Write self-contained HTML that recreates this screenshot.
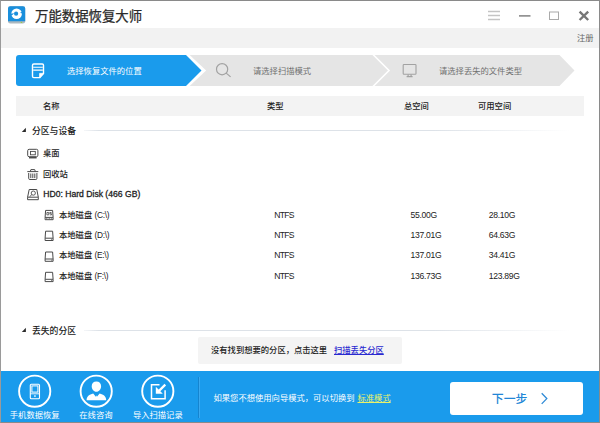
<!DOCTYPE html>
<html lang="zh-CN">
<head>
<meta charset="utf-8">
<title>万能数据恢复大师</title>
<style>
*{margin:0;padding:0;box-sizing:border-box}
html,body{width:600px;height:423px;overflow:hidden;background:#fff}
body{position:relative;font-family:"Liberation Sans","Noto Sans CJK SC",sans-serif;color:#222;font-size:8.3px;font-weight:500}
.abs{position:absolute}
.t{position:absolute;white-space:nowrap;line-height:12px;height:12px}
#frame{position:absolute;left:0;top:0;width:600px;height:423px;border:1px solid #8a8a8a;border-left-color:#9a9a9a;z-index:50;pointer-events:none}
#title{left:35px;top:7.500px;font-size:13.4px;line-height:18px;height:18px;color:#2a2a2a;font-weight:400;-webkit-text-stroke:0.250px #2a2a2a}
#strip{left:1px;top:28px;width:598px;height:20px;background:#f2f2f2}
#hdr{left:16px;top:96px;width:568px;height:20px;background:#f3f3f3}
.row{font-size:8.3px;color:#222}
.num{font-size:8.600px;color:#222;letter-spacing:-0.320px}
.ntfs{font-size:8.600px;letter-spacing:-0.720px}
.lat{font-size:8.400px;letter-spacing:-0.300px}
.sec{font-size:8.800px;color:#222;font-weight:500}
.line{position:absolute;height:1px;background:linear-gradient(to right,rgba(221,226,232,0.300) 0%,#dde2e8 3%,#dde2e8 72%,rgba(221,226,232,0) 100%)}
#msg{left:198px;top:336.500px;width:204px;height:27px;background:#f4f4f4;border-radius:2px}
#bar{left:1px;top:371px;width:598px;height:51px;background:#1a9bec}
.lbl{color:#fff;font-size:8.3px;font-weight:400}
#btn{left:450px;top:382px;width:133px;height:33px;background:#fff;border-radius:3px}
a{color:#2a2ad0;text-decoration:underline}
</style>
</head>
<body>
<div id="strip" class="abs"></div>
<div id="title" class="t">万能数据恢复大师</div>

<!-- app icon -->
<svg class="abs" style="left:7px;top:5px" width="20" height="20" viewBox="0 0 20 20">
  <rect x="1" y="1.300" width="17.200" height="17.300" rx="2.300" fill="#aeb9c0"/>
  <path d="M3.300 1.300h12.600a2.300 2.300 0 0 1 2.300 2.300v12.700h-17.200v-12.700a2.300 2.300 0 0 1 2.300-2.300z" fill="#1a8fdc"/>
  <circle cx="9.600" cy="8.800" r="5.300" fill="#fff"/>
  <circle cx="9.100" cy="8.700" r="2.100" fill="#1a8fdc"/>
  <path d="M7.400 8.300L3.200 8.700L4.300 10.800z" fill="#1a8fdc"/>
  <path d="M15.800 6.500L13 7.800L15.800 8.800z" fill="#1a8fdc"/>
  <rect x="13.700" y="16.900" width="1.500" height="1" fill="#9acb3c"/>
</svg>

<!-- window controls -->
<svg class="abs" style="left:480px;top:5px" width="115" height="20" viewBox="0 0 115 20">
  <g stroke="#c4c4c4" stroke-width="1.500">
    <line x1="8" y1="6.5" x2="20" y2="6.5"/><line x1="8" y1="10.5" x2="20" y2="10.5"/><line x1="8" y1="14.5" x2="20" y2="14.5"/>
  </g>
  <line x1="39" y1="10.9" x2="50.5" y2="10.9" stroke="#7a7a7a" stroke-width="1.4"/>
  <rect x="69.5" y="7" width="9" height="7.5" fill="none" stroke="#aaa" stroke-width="1"/>
  <path d="M99.6 6.6l8.6 8.4M108.2 6.6l-8.6 8.4" stroke="#777" stroke-width="2.400" fill="none"/>
</svg>
<div class="t" style="left:577px;top:32px;font-size:8.3px;color:#666;font-weight:400">注册</div>

<!-- steps -->
<svg class="abs" style="left:0;top:50px" width="600" height="42" viewBox="0 0 600 42">
  <path d="M188 5H559.5L574.5 20.5L559.5 36H188z" fill="#e5e5e5"/>
  <path d="M185 4L202.5 20.5L185 37" fill="none" stroke="#fff" stroke-width="5"/>
  <path d="M19 5H186L201.5 20.5L186 36H19a3 3 0 0 1-3-3V8a3 3 0 0 1 3-3z" fill="#1a9bec"/>
  <path d="M373 4.5L389 20.5L373 36.500" fill="none" stroke="#fff" stroke-width="1.6"/>
  <!-- doc icon -->
  <g fill="none" stroke="#fff" stroke-width="1.400" stroke-linejoin="round">
    <path d="M33.800 14h8.400a1.300 1.300 0 0 1 1.300 1.300v8.300l-3.600 4h-6.100a1.300 1.300 0 0 1-1.300-1.300v-11a1.300 1.300 0 0 1 1.300-1.300z"/>
    <path d="M43.400 23.400h-3.800v4.200z" fill="#fff" stroke-width="0.800"/>
    <path d="M33.200 17.300h9.600M33.200 20.100h9.600" stroke-width="1.100"/>
  </g>
  <!-- search icon -->
  <g fill="none" stroke="#a2a2a2" stroke-width="1.200">
    <circle cx="222.100" cy="19.200" r="5.600"/>
    <path d="M226.200 23.100l4.400 3.800"/>
  </g>
  <!-- monitor icon -->
  <g fill="none" stroke="#a2a2a2" stroke-width="1.100">
    <rect x="403.200" y="14.500" width="12.800" height="9.800" rx="0.800"/>
    <path d="M408.400 24.500l-0.600 2h3.600l-0.600-2M406.600 26.600h6"/>
  </g>
</svg>
<div class="t" style="left:67px;top:65px;font-size:8.3px;color:#fff;font-weight:400">选择恢复文件的位置</div>
<div class="t" style="left:253px;top:65px;font-size:8.3px;color:#707070;font-weight:400">请选择扫描模式</div>
<div class="t" style="left:439px;top:65px;font-size:8.3px;color:#707070;font-weight:400">请选择丢失的文件类型</div>

<!-- table header -->
<div id="hdr" class="abs"></div>
<div class="t row" style="left:43px;top:100px">名称</div>
<div class="t row" style="left:267px;top:100px">类型</div>
<div class="t row" style="left:404px;top:100px">总空间</div>
<div class="t row" style="left:478px;top:100px">可用空间</div>

<!-- section 1 -->
<svg class="abs" style="left:21px;top:127px" width="6" height="6" viewBox="0 0 6 6"><path d="M4.900 0.800V4.900H0.800z" fill="#2a2a2a"/></svg>
<div class="t sec" style="left:32px;top:125px">分区与设备</div>
<div class="line" style="left:84px;top:130px;width:486px"></div>

<!-- icons of tree -->
<svg class="abs" style="left:24px;top:145px" width="34" height="140" viewBox="0 0 34 140" fill="none" stroke="#4a4a4a" stroke-width="1">
  <!-- desktop -->
  <rect x="3.700" y="4.300" width="10.200" height="7.400" rx="1.400"/>
  <rect x="6.500" y="6.400" width="4.800" height="3.400" stroke-width="0.900"/>
  <path d="M5 12.700h7.600" stroke-width="1.500"/>
  <!-- recycle -->
  <path d="M3.300 26.600h11M6.300 26.400l0.600-1.800h3.800l0.600 1.800"/>
  <path d="M4.700 28v5.400a1.100 1.100 0 0 0 1.100 1.100h6a1.100 1.100 0 0 0 1.100-1.100v-5.400M6.800 28.500v4.600M8.800 28.500v4.600M10.800 28.500v4.600"/>
  <!-- hdd -->
  <path d="M5.200 44.500H12.800L14.300 52.200V54.700H3.600V52.200z"/>
  <path d="M3.600 52.200H14.300"/>
  <circle cx="9.300" cy="48.100" r="2.100" stroke-width="0.900"/>
  <path d="M7.800 49.700L5.600 51.700" stroke-width="0.900"/>
  <!-- drives -->
  <path d="M21.6 65.4H28.6L29.1 72.4V74.7H21.1V72.4z"/><path d="M21.1 72.4H29.1"/><path d="M22.9 67.5h1.800v2.400h-1.800zM27.5 67.5h-1.700v1.200h1.700v1.200h-1.700" stroke-width="0.800"/><path d="M22.2 73.6h4.500" stroke-width="0.800" stroke-dasharray="0.800 0.600"/><path d="M27.3 73.6h0.900" stroke-width="0.900"/>
  <path d="M21.6 86.2H28.6L29.1 93.2V95.5H21.1V93.2z"/><path d="M21.1 93.2H29.1"/><path d="M27.3 94.4h0.900" stroke-width="0.900"/>
  <path d="M21.6 107.0H28.6L29.1 114.0V116.3H21.1V114.0z"/><path d="M21.1 114.0H29.1"/><path d="M27.3 115.2h0.900" stroke-width="0.900"/>
  <path d="M21.6 127.3H28.6L29.1 134.3V136.6H21.1V134.3z"/><path d="M21.1 134.3H29.1"/><path d="M27.3 135.5h0.900" stroke-width="0.900"/>
</svg>

<div class="t row" style="left:43px;top:147px">桌面</div>
<div class="t row" style="left:43px;top:167.500px">回收站</div>
<div class="t row" style="left:43.300px;top:188.300px;font-size:8.600px;-webkit-text-stroke:0.300px #222">HD0: Hard Disk (466 GB)</div>
<div class="t row" style="left:59px;top:208.800px">本地磁盘 <span class="lat">(C:\)</span></div>
<div class="t row" style="left:59px;top:229.100px">本地磁盘 <span class="lat">(D:\)</span></div>
<div class="t row" style="left:59px;top:249.400px">本地磁盘 <span class="lat">(E:\)</span></div>
<div class="t row" style="left:59px;top:269.700px">本地磁盘 <span class="lat">(F:\)</span></div>

<div class="t num ntfs" style="left:274.300px;top:208.800px">NTFS</div>
<div class="t num ntfs" style="left:274.300px;top:229.100px">NTFS</div>
<div class="t num ntfs" style="left:274.300px;top:249.400px">NTFS</div>
<div class="t num ntfs" style="left:274.300px;top:269.700px">NTFS</div>

<div class="t num" style="left:410.600px;top:208.800px">55.00G</div>
<div class="t num" style="left:410.600px;top:229.100px">137.01G</div>
<div class="t num" style="left:410.600px;top:249.400px">137.01G</div>
<div class="t num" style="left:410.600px;top:269.700px">136.73G</div>

<div class="t num" style="left:488.800px;top:208.800px">28.10G</div>
<div class="t num" style="left:488.800px;top:229.100px">64.63G</div>
<div class="t num" style="left:488.800px;top:249.400px">34.41G</div>
<div class="t num" style="left:488.800px;top:269.700px">123.89G</div>

<!-- section 2 -->
<svg class="abs" style="left:21px;top:327px" width="6" height="6" viewBox="0 0 6 6"><path d="M4.900 0.800V4.900H0.800z" fill="#2a2a2a"/></svg>
<div class="t sec" style="left:32px;top:325px">丢失的分区</div>
<div class="line" style="left:84px;top:330px;width:486px"></div>

<div id="msg" class="abs"></div>
<div class="t row" style="left:211px;top:344.400px">没有找到想要的分区，点击这里</div>
<div class="t row" style="left:334px;top:344.400px"><a>扫描丢失分区</a></div>

<!-- bottom bar -->
<div id="bar" class="abs"></div>
<svg class="abs" style="left:0;top:371px" width="210" height="52" viewBox="0 0 210 52" fill="none" stroke="#fff">
  <g stroke-width="1.900">
    <circle cx="34.700" cy="20.200" r="15.600"/>
    <circle cx="96.200" cy="20.200" r="15.600"/>
    <circle cx="157.800" cy="20.200" r="15.600"/>
  </g>
  <!-- phone -->
  <rect x="30.300" y="13.300" width="9.200" height="14.400" rx="1" stroke-width="1.100"/>
  <rect x="31.900" y="14.900" width="6" height="6.200" stroke-width="1"/>
  <path d="M30.300 22.800h9.200" stroke-width="0.900"/>
  <rect x="34.200" y="24.300" width="1.500" height="1.500" fill="#fff" stroke="none"/>
  <!-- person -->
  <path d="M96.400 10.400c2.900 0 4.700 2 4.700 4.800 0 2.900-2 5.500-4.700 5.500s-4.700-2.600-4.700-5.500c0-2.800 1.800-4.800 4.700-4.800z" fill="#fff" stroke="none"/>
  <path d="M86.600 29.200c0-4 2.600-5.700 6.600-6.800l2.700 3.300 0.500-1.500 0.500 1.500 2.700-3.300c4 1.100 6.600 2.800 6.600 6.800z" fill="#fff" stroke="none"/>
  <!-- import -->
  <path d="M159.500 13.700h-8v14h13.600v-8.400" stroke-width="1.500"/>
  <path d="M165.300 13.600l-6.500 6.500" stroke-width="2.200"/>
  <path d="M155.800 15.700v7h7z" fill="#fff" stroke="none"/>
  <line x1="198.500" y1="6" x2="198.500" y2="47" stroke="#1584cf" stroke-width="1"/>
  <line x1="199.500" y1="6" x2="199.500" y2="47" stroke="#3aa9f1" stroke-width="1"/>
</svg>
<div class="t lbl" style="left:0;top:409px;width:69.400px;text-align:center">手机数据恢复</div>
<div class="t lbl" style="left:61.200px;top:409px;width:69.400px;text-align:center">在线咨询</div>
<div class="t lbl" style="left:123.100px;top:409px;width:69.400px;text-align:center">导入扫描记录</div>

<div class="t lbl" style="left:213.500px;top:392px">如果您不想使用向导模式，可以切换到</div>
<div class="t lbl" style="left:357.500px;top:392px"><a style="color:#e9f26a">标准模式</a></div>

<div id="btn" class="abs"></div>
<div class="t" style="left:491.800px;top:391.500px;font-size:11.900px;line-height:14px;height:14px;color:#2286d6">下一步</div>
<svg class="abs" style="left:538px;top:391px" width="12" height="16" viewBox="0 0 12 16"><path d="M3.700 2.300L8.800 7.600L3.700 12.900" fill="none" stroke="#2e8ad6" stroke-width="1.300"/></svg>

<div id="frame"></div>
</body>
</html>
